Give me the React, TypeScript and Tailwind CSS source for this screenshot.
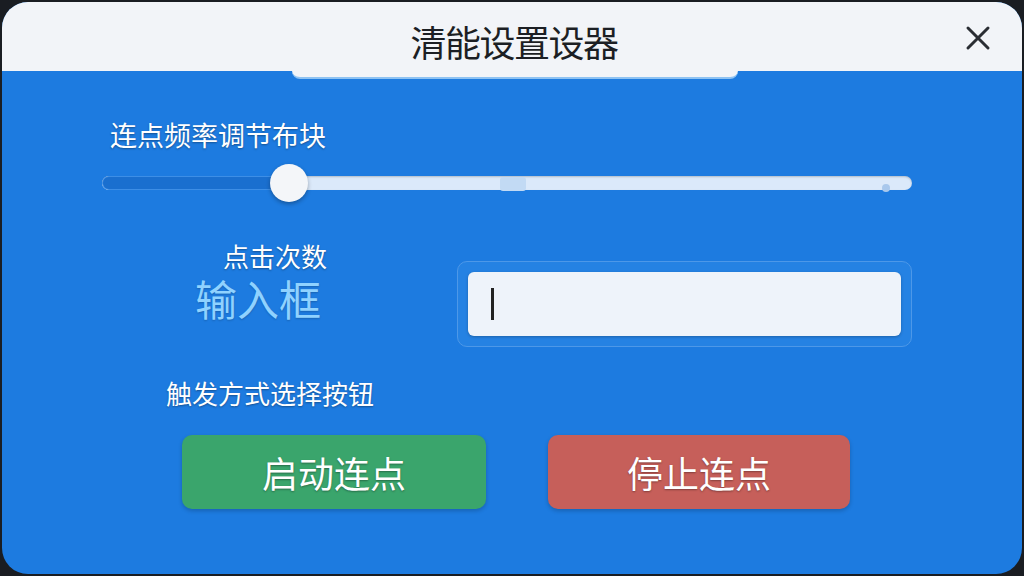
import React from 'react';

const font = { fontFamily: '"Noto Sans CJK SC", "Noto Sans", sans-serif' };

export default function App() {
  return (
    <div className="w-[1024px] h-[576px] bg-[#1a1d22] p-[2px]" style={font}>
      <div className="w-full h-full rounded-[26px] overflow-hidden bg-[#1d7be0] flex flex-col relative">
        {/* header */}
        <div className="h-[69px] bg-[#f2f4f8] relative flex items-center justify-center shrink-0">
          <h1 className="text-[36px] text-[#1c1f24] tracking-[-1.5px] mt-[8px] ml-[4px]">清能设置设器</h1>
          <button className="absolute right-[30px] top-[22px] text-[#2a2d33]">
            <svg width="28" height="28" viewBox="0 0 28 28" fill="none" stroke="currentColor" strokeWidth="3" strokeLinecap="round">
              <path d="M4 4L24 24M24 4L4 24" />
            </svg>
          </button>
          <div className="absolute left-[290px] top-[69px] w-[446px] h-[8px] bg-[#f2f4f8] rounded-b-[10px] border-b-2 border-[#8ec2f2]" />
        </div>

        {/* body */}
        <div className="flex-1 flex flex-col pl-[100px] pr-[110px] pt-[48px]">
          <div className="text-[27px] text-white pl-[8px] leading-[32px] [text-shadow:0_1px_2px_rgba(0,0,0,0.35)]">连点频率调节布块</div>

          <div className="relative h-[40px] mt-[12px] flex items-center">
            <div className="flex-1 h-[14px] rounded-full bg-[#dbe9fa] flex overflow-hidden shadow-[inset_0_1px_2px_rgba(0,0,0,0.2)]">
              <div className="w-[187px] h-full bg-[#1a6fcf] border border-[#3d8ee6] rounded-l-full" />
            </div>
            <div className="absolute left-[398px] top-[14px] w-[26px] h-[14px] rounded-[3px] bg-[#c2daf4]" />
            <div className="absolute left-[780px] top-[21px] w-[8px] h-[8px] rounded-full bg-[#a9c8ec]" />
            <div className="absolute left-[168px] top-[1px] w-[38px] h-[38px] rounded-full bg-[#f4f6f9] shadow-[0_2px_4px_rgba(0,0,0,0.3)]" />
          </div>

          <div className="flex items-start mt-[39px]">
            <div className="w-[226px] flex flex-col items-end gap-[2px]">
              <div className="text-[26px] text-white leading-[28px] [text-shadow:0_1px_2px_rgba(0,0,0,0.35)]">点击次数</div>
              <div className="text-[42px] text-[#8fd2ff] leading-[52px] mr-[6px] [text-shadow:0_1px_2px_rgba(0,0,0,0.2)]">输入框</div>
            </div>
            <div className="ml-[130px] mt-[19px] w-[457px] h-[86px] rounded-[10px] border border-[#4d98e8] bg-[#2582e3] p-[10px]">
              <div className="w-full h-full bg-[#eef3fa] rounded-[6px] flex items-center pl-[23px] shadow-[0_1px_3px_rgba(0,0,0,0.25)]">
                <div className="w-[3px] h-[32px] bg-[#222]" />
              </div>
            </div>
          </div>

          <div className="text-[26px] text-white pl-[64px] leading-[32px] mt-[30px] [text-shadow:0_1px_2px_rgba(0,0,0,0.35)]">触发方式选择按钮</div>

          <div className="flex mt-[26px] pl-[80px] gap-[62px]">
            <button className="w-[304px] h-[74px] rounded-[10px] bg-[#3aa56c] text-white text-[36px] [text-shadow:0_1px_2px_rgba(0,0,0,0.35)] shadow-[0_2px_4px_rgba(0,0,0,0.2)]">启动连点</button>
            <button className="w-[302px] h-[74px] rounded-[10px] bg-[#c65f5a] text-white text-[36px] [text-shadow:0_1px_2px_rgba(0,0,0,0.35)] shadow-[0_2px_4px_rgba(0,0,0,0.2)]">停止连点</button>
          </div>
        </div>
      </div>
    </div>
  );
}
